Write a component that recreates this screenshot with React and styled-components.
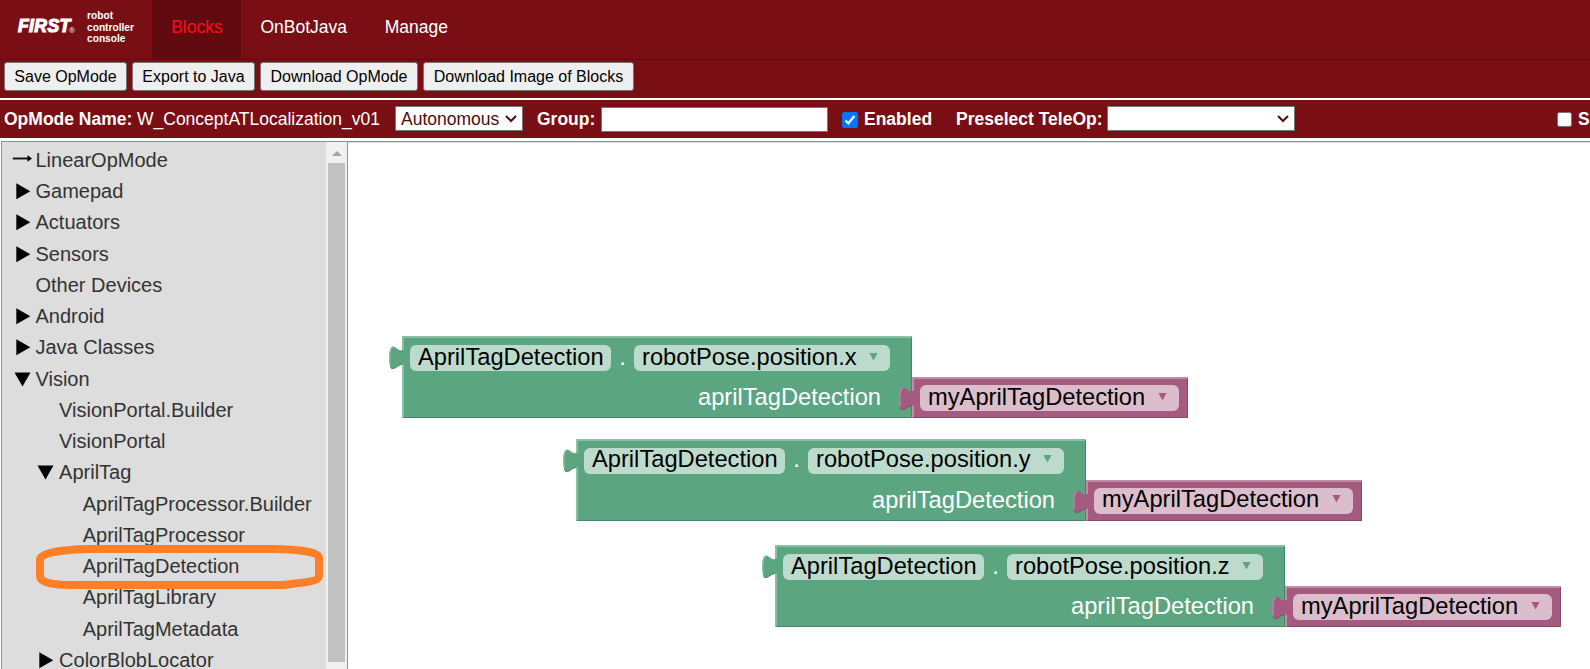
import React from 'react';
import styled, { createGlobalStyle } from 'styled-components';

const GlobalStyle = createGlobalStyle`
  * { box-sizing: border-box; }
  html, body { margin: 0; background: #fff; overflow: hidden; }
  body { font-family: "Liberation Sans", Arial, sans-serif; }
`;

const Page = styled.div`
  display: flex;
  flex-direction: column;
  width: 1590px;
  height: 669px;
  overflow: hidden;
`;

const Header = styled.header`
  display: flex;
  height: 60px;
  flex: none;
  background: #790e15;
  border-bottom: 1px solid #610b10;
`;

const Brand = styled.div`
  display: flex;
  width: 152px;
  padding: 10px 0 0 18px;
`;

const Logo = styled.div`
  display: flex;
  align-items: flex-end;
  width: 69px;
  height: 25px;
  color: #fff;
  white-space: nowrap;
`;

const LogoWord = styled.span`
  display: block;
  width: 51px;
  font: italic 900 17.5px/18px "Liberation Sans", Arial, sans-serif;
  letter-spacing: 0.4px;
  -webkit-text-stroke: 1.2px #fff;
`;

const LogoMark = styled.span`
  font-size: 8px;
  line-height: 8px;
`;

const Tagline = styled.div`
  color: #fff;
  font-size: 10.2px;
  font-weight: bold;
  line-height: 11.6px;
`;

const Tab = styled.a`
  display: flex;
  align-items: center;
  height: 59px;
  padding: 0 18.5px 5px 19.2px;
  font-size: 17.5px;
  color: ${(p) => (p.$active ? '#ff0a18' : '#fff')};
  background: ${(p) => (p.$active ? '#610b10' : 'transparent')};
`;

const Toolbar = styled.div`
  display: flex;
  flex: none;
  gap: 5px;
  height: 38px;
  padding: 2px 4px;
  background: #790e15;
`;

const Button = styled.button`
  width: ${(p) => p.$width}px;
  height: 29px;
  padding: 1px 0 0;
  border: 1px solid #767676;
  border-radius: 3px;
  background: #efefef;
  color: #000;
  font: 16px "Liberation Sans", Arial, sans-serif;
  white-space: nowrap;
`;

const OptionsBar = styled.div`
  display: flex;
  flex: none;
  align-items: center;
  height: 40px;
  padding: 0 0 1px 4px;
  border-top: 2px solid #fff;
  background: #790e15;
  color: #fff;
  font-size: 17.5px;
  white-space: nowrap;
  overflow: hidden;
`;

const OptionLabel = styled.span`
  flex: none;
  width: ${(p) => p.$width}px;
  padding-top: 1px;
  font-weight: bold;
`;

const OpModeName = styled.span`
  flex: none;
  width: 258px;
  padding-top: 1px;
`;

const Select = styled.div`
  display: flex;
  flex: none;
  align-items: center;
  justify-content: space-between;
  width: ${(p) => p.$width}px;
  height: 25px;
  margin-right: ${(p) => p.$after}px;
  padding: 1px 5px 0;
  border: 1px solid #767676;
  border-radius: 1px;
  background: #fff;
  color: #4d0c10;
  font-size: 17.5px;
`;

const TextInput = styled.input`
  flex: none;
  width: 227px;
  height: 25px;
  margin: 1px 14px 0 0;
  border: 1px solid #767676;
  border-radius: 1px;
  background: #fff;
`;

const Checkbox = styled.span`
  display: flex;
  flex: none;
  align-items: center;
  justify-content: center;
  width: ${(p) => (p.$checked ? 16 : 15)}px;
  height: ${(p) => (p.$checked ? 16 : 15)}px;
  margin: ${(p) => (p.$checked ? 3 : 2)}px 6px 0 0;
  border: ${(p) => (p.$checked ? 'none' : '1px solid #767676')};
  border-radius: 2.5px;
  background: ${(p) => (p.$checked ? '#0075ff' : '#fff')};
`;

const Workspace = styled.main`
  display: flex;
  flex: 1;
  min-height: 0;
  margin: 3px 0 0 1px;
  border-top: 1px solid #919191;
  border-left: 1px solid #919191;
`;

const Sidebar = styled.aside`
  position: relative;
  display: flex;
  flex: none;
  width: 346px;
  border-right: 1px solid #919191;
  background: #ddd;
  overflow: hidden;
`;

const Tree = styled.ul`
  flex: 1;
  margin: 0;
  padding: 2.8px 0 0;
  list-style: none;
`;

const TreeRow = styled.li`
  display: flex;
  align-items: center;
  height: 31.25px;
  padding-left: ${(p) => 9.5 + p.$level * 23.6}px;
  color: #333;
  font-size: 20px;
  white-space: nowrap;
`;

const TreeIcon = styled.span`
  display: flex;
  flex: none;
  width: 24px;
`;

const Scrollbar = styled.div`
  display: flex;
  flex-direction: column;
  align-items: center;
  width: 21px;
  padding-top: 9px;
  background: #f1f1f1;
`;

const Thumb = styled.div`
  width: 17px;
  height: 499px;
  margin-top: 7px;
  background: #c1c1c1;
`;

const Highlight = styled.svg`
  position: absolute;
  left: 34px;
  top: 401px;
`;

const Canvas = styled.section`
  position: relative;
  flex: 1;
  border-top: 1px solid #ddd;
`;

const BlockGroup = styled.div`
  position: absolute;
  display: flex;
  align-items: flex-end;
  left: ${(p) => p.$x}px;
  top: ${(p) => p.$y}px;
`;

const shade = {
  green: { fill: '#5ba580', light: '#8cc0a6', dark: '#498466', field: '#bddbcc' },
  plum: { fill: '#a55b80', light: '#c08ca6', dark: '#844966', field: '#dbbdcc' },
};

const BlockBody = styled.div`
  position: relative;
  width: ${(p) => p.$width}px;
  height: ${(p) => p.$height}px;
  padding: ${(p) => p.$padding};
  border: solid;
  border-width: 2px 1px 1px 2px;
  border-color: ${({ $tone: t }) => `${shade[t].light} ${shade[t].dark} ${shade[t].dark} ${shade[t].light}`};
  border-radius: 1px;
  background: ${(p) => shade[p.$tone].fill};
`;

const Connector = styled.svg`
  position: absolute;
  left: -15px;
  top: 8px;
  overflow: visible;
`;

const FieldLine = styled.div`
  display: flex;
  align-items: center;
  height: 26px;
`;

const Field = styled.div`
  display: flex;
  align-items: center;
  justify-content: space-between;
  width: ${(p) => p.$width}px;
  height: 26px;
  padding: 0 12.5px 3px 8px;
  border-radius: 6px;
  background: ${(p) => shade[p.$tone].field};
  color: #000;
  font-size: 23.7px;
  line-height: 26px;
  white-space: nowrap;
`;

const Dot = styled.span`
  width: 23px;
  padding-bottom: 2px;
  color: #fff;
  font-size: 23.7px;
  line-height: 25px;
  text-align: center;
`;

const InputLabel = styled.div`
  margin-top: 13px;
  padding-right: 30px;
  color: #fff;
  font-size: 23.7px;
  line-height: 26px;
  text-align: right;
`;

const Caret = ({ tone }) => (
  <svg width="9" height="8" viewBox="0 0 9 8">
    <path d="M0.4 0H8.6L4.5 7.5Z" fill={shade[tone].fill} />
  </svg>
);

const Chevron = () => (
  <svg width="12" height="8" viewBox="0 0 12 8">
    <path d="M1 1L6 6L11 1" fill="none" stroke="#4d0c10" strokeWidth="2" />
  </svg>
);

const PuzzleTab = ({ tone }) => (
  <Connector width="15" height="24" viewBox="0 0 15 24">
    <path
      d="M15 4H13C10.5 4.6 9 3.5 7.7 2.3C6.6 1.4 5.5 .6 4.3 .4C2.3 .2 1 3 .5 6C0 10 0 15 1 19.5C1.6 22 2.8 23 4.3 22.8C6 22.5 7 21.5 8.5 20.5C10 19.6 11.5 19 13 18.5H15Z"
      fill={shade[tone].fill}
    />
    <path d="M1.3 19C.7 15 .7 10 1.2 6C1.7 3 2.6 1.1 4.3 1.1" fill="none" stroke={shade[tone].light} strokeWidth="1.3" />
    <path d="M1.3 20.5C2 22.4 3 22.8 4.3 22.5C6 22.2 7 21.2 8.5 20.2C10 19.3 11.5 18.8 13 18.2" fill="none" stroke={shade[tone].dark} strokeWidth="1" />
  </Connector>
);

const icons = {
  arrow: (
    <svg width="21" height="9" viewBox="0 0 21 9" style={{ marginTop: -4 }}>
      <path d="M0.8 4.5H17" stroke="#111" strokeWidth="1.9" />
      <path d="M15.5 1.3L20 4.5L15.5 7.7Z" fill="#000" />
    </svg>
  ),
  closed: (
    <svg width="20" height="17" viewBox="0 0 20 17">
      <path d="M4.3 0.3L18.3 8.2L4.3 16.2Z" fill="#000" />
    </svg>
  ),
  open: (
    <svg width="20" height="15" viewBox="0 0 20 15">
      <path d="M2.5 0.5H18.5L10.5 14.5Z" fill="#000" />
    </svg>
  ),
};

const tree = [
  ['LinearOpMode', 0, 'arrow'],
  ['Gamepad', 0, 'closed'],
  ['Actuators', 0, 'closed'],
  ['Sensors', 0, 'closed'],
  ['Other Devices', 0],
  ['Android', 0, 'closed'],
  ['Java Classes', 0, 'closed'],
  ['Vision', 0, 'open'],
  ['VisionPortal.Builder', 1],
  ['VisionPortal', 1],
  ['AprilTag', 1, 'open'],
  ['AprilTagProcessor.Builder', 2],
  ['AprilTagProcessor', 2],
  ['AprilTagDetection', 2],
  ['AprilTagLibrary', 2],
  ['AprilTagMetadata', 2],
  ['ColorBlobLocator', 1, 'closed'],
];

const blocks = [
  { axis: 'x', x: 54, y: 193 },
  { axis: 'y', x: 228, y: 295.5 },
  { axis: 'z', x: 427, y: 402 },
];

const GetterBlock = ({ axis, x, y }) => (
  <BlockGroup $x={x} $y={y}>
    <BlockBody $tone="green" $width={510} $height={82} $padding="7px 0 0 6px">
      <PuzzleTab tone="green" />
      <FieldLine>
        <Field $tone="green" $width={201}>AprilTagDetection</Field>
        <Dot>.</Dot>
        <Field $tone="green" $width={256}>
          {`robotPose.position.${axis}`}
          <Caret tone="green" />
        </Field>
      </FieldLine>
      <InputLabel>aprilTagDetection</InputLabel>
    </BlockBody>
    <BlockBody $tone="plum" $width={276} $height={41} $padding="6px 0 0 6px">
      <PuzzleTab tone="plum" />
      <Field $tone="plum" $width={259}>
        myAprilTagDetection
        <Caret tone="plum" />
      </Field>
    </BlockBody>
  </BlockGroup>
);

export default function App() {
  return (
    <Page>
      <GlobalStyle />
      <Header>
        <Brand>
          <Logo>
            <LogoWord>FIRST</LogoWord>
            <LogoMark>®</LogoMark>
          </Logo>
          <Tagline>robot<br />controller<br />console</Tagline>
        </Brand>
        <Tab $active>Blocks</Tab>
        <Tab>OnBotJava</Tab>
        <Tab>Manage</Tab>
      </Header>
      <Toolbar>
        <Button $width={123}>Save OpMode</Button>
        <Button $width={123}>Export to Java</Button>
        <Button $width={158}>Download OpMode</Button>
        <Button $width={211}>Download Image of Blocks</Button>
      </Toolbar>
      <OptionsBar>
        <OptionLabel $width={133}>OpMode Name:</OptionLabel>
        <OpModeName>W_ConceptATLocalization_v01</OpModeName>
        <Select $width={128} $after={14}>Autonomous<Chevron /></Select>
        <OptionLabel $width={64}>Group:</OptionLabel>
        <TextInput />
        <Checkbox $checked>
          <svg width="12" height="12" viewBox="0 0 12 12">
            <path d="M1.5 6.5L4.4 9.3L10.4 2" fill="none" stroke="#fff" strokeWidth="2.2" />
          </svg>
        </Checkbox>
        <OptionLabel $width={92}>Enabled</OptionLabel>
        <OptionLabel $width={151}>Preselect TeleOp:</OptionLabel>
        <Select $width={188} $after={262}><span /><Chevron /></Select>
        <Checkbox />
        <OptionLabel $width={12}>S</OptionLabel>
      </OptionsBar>
      <Workspace>
        <Sidebar>
          <Tree>
            {tree.map(([name, level, icon]) => (
              <TreeRow key={name} $level={level}>
                <TreeIcon>{icons[icon]}</TreeIcon>
                {name}
              </TreeRow>
            ))}
          </Tree>
          <Scrollbar>
            <svg width="10" height="5" viewBox="0 0 10 5">
              <path d="M0 5L5 0L10 5Z" fill="#a3a3a3" />
            </svg>
            <Thumb />
          </Scrollbar>
          <Highlight width="288" height="46" viewBox="0 0 288 46">
            <path
              d="M50 6H236C258 6.3 283 8 283 15V33C283 39 264 40 246 42H36C18 42 4 40 4 33V17C4 9 28 7 50 6Z"
              fill="none"
              stroke="#ff7f27"
              strokeWidth="8"
            />
          </Highlight>
        </Sidebar>
        <Canvas>
          {blocks.map((b) => <GetterBlock key={b.axis} {...b} />)}
        </Canvas>
      </Workspace>
    </Page>
  );
}
